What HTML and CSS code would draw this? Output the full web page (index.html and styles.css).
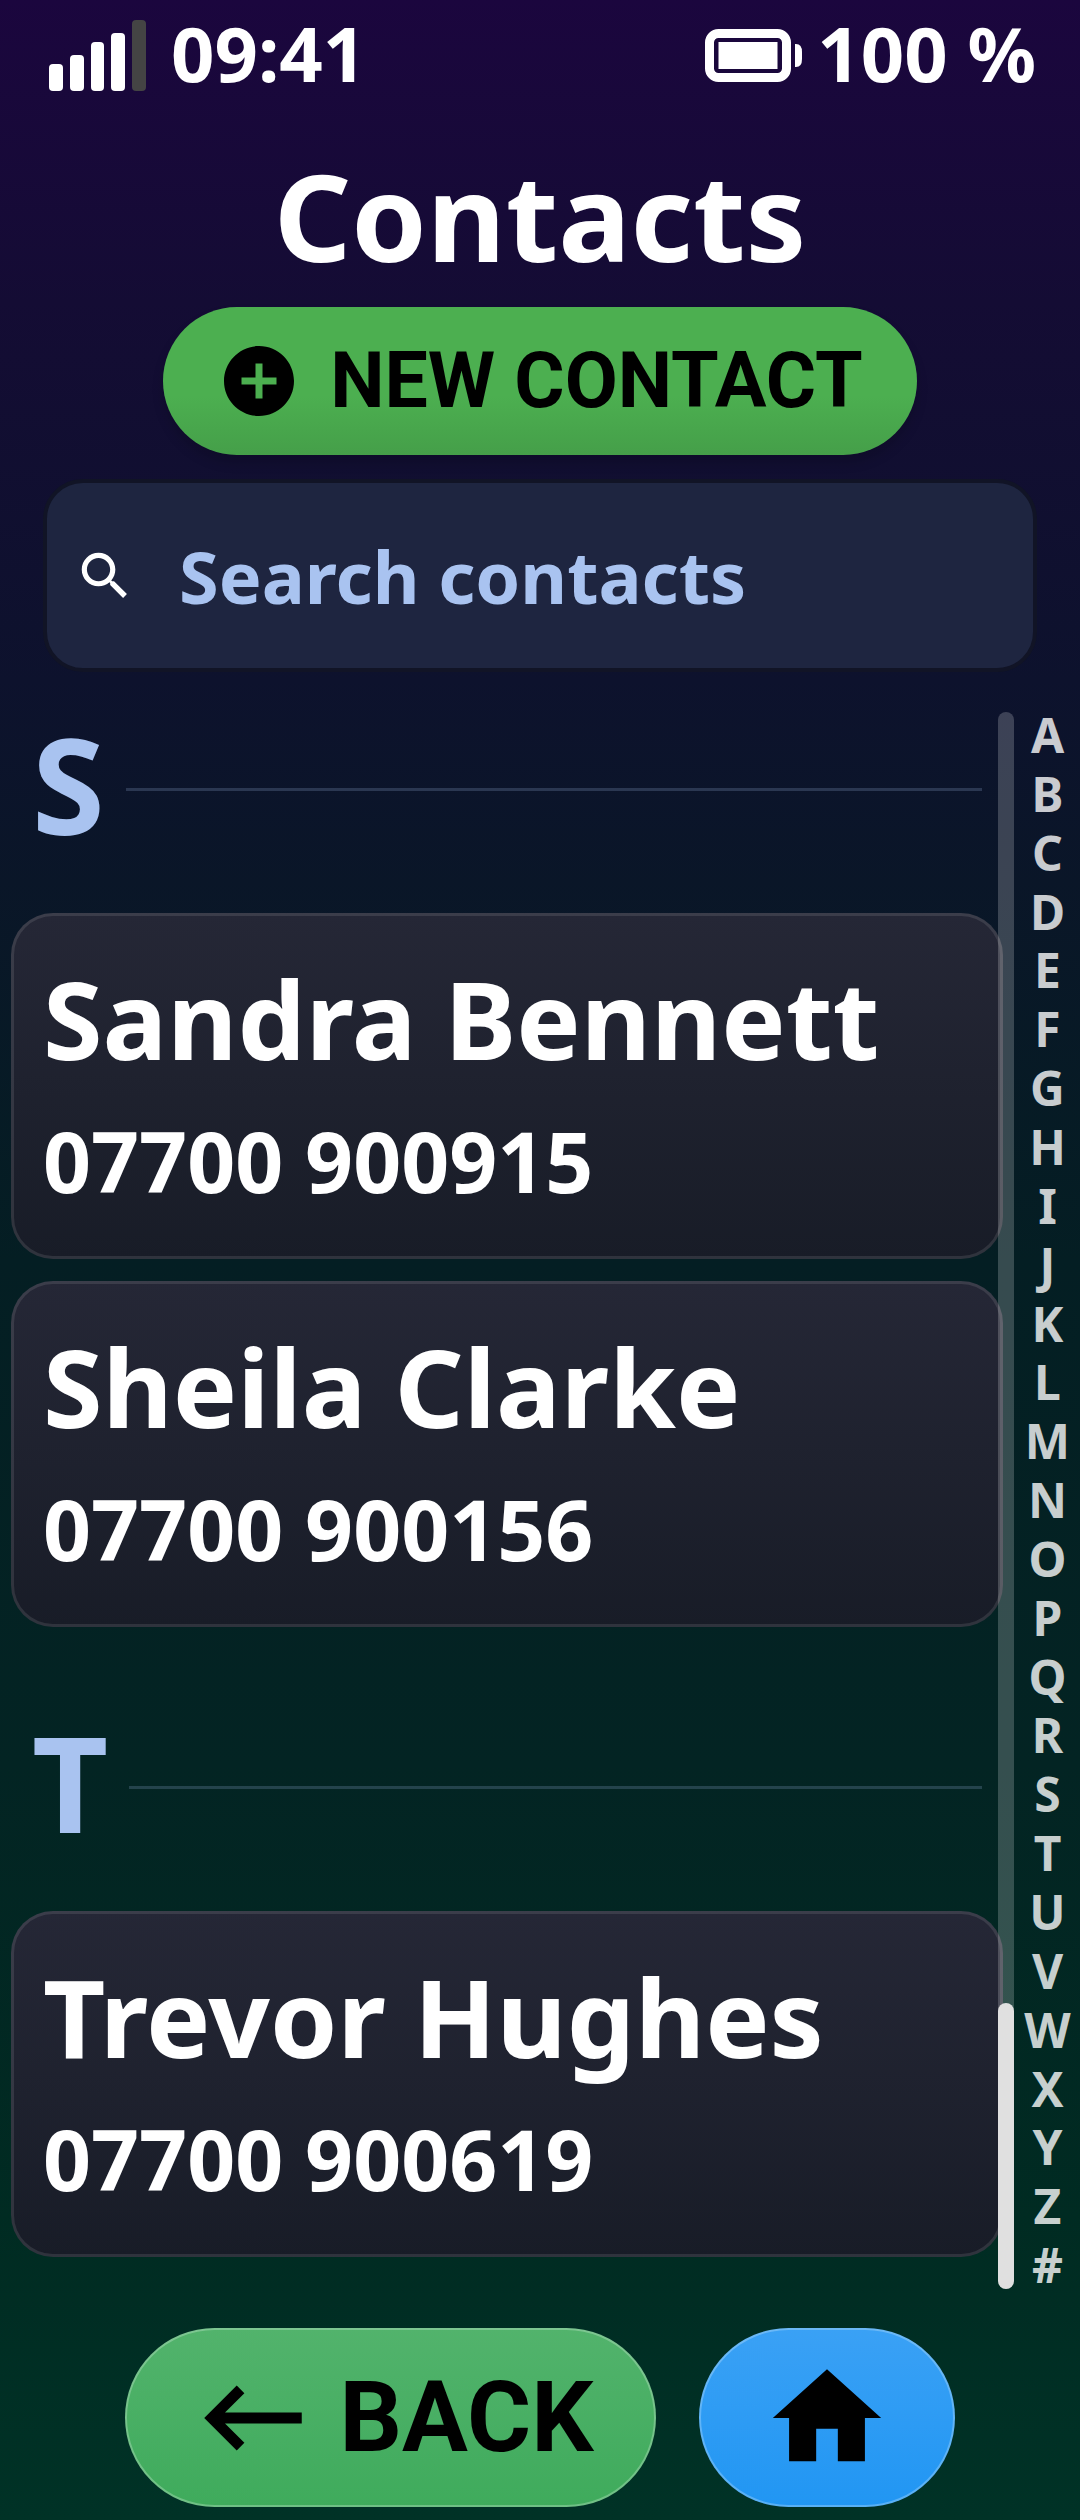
FILE: index.html
```html
<!DOCTYPE html>
<html lang="en">
<head>
  <meta charset="utf-8">
  <meta name="viewport" content="width=device-width, initial-scale=1">
  <title>Contacts</title>
  <link rel="stylesheet" href="styles.css">
</head>
<body>
  <header class="status">
    <div class="status-group">
      <svg class="status-icon" width="98" height="72" viewBox="0 0 98 72" aria-hidden="true">
        <g fill="#fff">
          <rect x="0" y="44" width="14" height="27" rx="4"/>
          <rect x="21" y="35" width="14" height="36" rx="4"/>
          <rect x="42" y="22" width="13" height="49" rx="4"/>
          <rect x="62" y="13" width="14" height="58" rx="4"/>
        </g>
        <rect x="83" y="0" width="14" height="71" rx="4" fill="#444"/>
      </svg>
      <span>09:41</span>
    </div>
    <div class="status-group">
      <svg class="status-icon" width="98" height="54" viewBox="0 0 98 54" aria-hidden="true">
        <rect x="4.500" y="4.500" width="77" height="44" rx="9" fill="none" stroke="#fff" stroke-width="9"/>
        <rect x="13.500" y="13" width="59" height="27" fill="#fff"/>
        <path d="M90 15h1q6 0 6 8v7q0 8-6 8h-1z" fill="#fff"/>
      </svg>
      <span>100 %</span>
    </div>
  </header>

  <h1 class="title">Contacts</h1>

  <button class="new-contact" type="button">
    <svg width="84" height="84" viewBox="0 0 24 24" aria-hidden="true"><path d="M12 2C6.480 2 2 6.480 2 12s4.480 10 10 10 10-4.480 10-10S17.520 2 12 2zm5 11h-4v4h-2v-4H7v-2h4V7h2v4h4v2z"/></svg>
    NEW CONTACT
  </button>

  <label class="search">
    <svg width="62" height="62" viewBox="0 0 24 24" aria-hidden="true"><path fill="#fff" d="M15.500 14h-.79l-.28-.27C15.410 12.590 16 11.110 16 9.500 16 5.910 13.090 3 9.500 3S3 5.910 3 9.500 5.910 16 9.500 16c1.610 0 3.090-.59 4.230-1.570l.27.28v.79l5 4.990L20.490 19l-4.990-5zm-6 0C7.010 14 5 11.990 5 9.500S7.010 5 9.500 5 14 7.010 14 9.500 11.990 14 9.500 14z"/></svg>
    <input class="search-input" type="text" placeholder="Search contacts" aria-label="Search contacts">
  </label>

  <main class="browser">
    <div class="list">
      <section class="group">
        <h2 class="group-title">S</h2>
        <div class="cards">
          <button class="card" type="button"><span class="name">Sandra Bennett</span><span class="number">07700 900915</span></button>
          <button class="card" type="button"><span class="name">Sheila Clarke</span><span class="number">07700 900156</span></button>
        </div>
      </section>
      <section class="group">
        <h2 class="group-title">T</h2>
        <div class="cards">
          <button class="card" type="button"><span class="name">Trevor Hughes</span><span class="number">07700 900619</span></button>
        </div>
      </section>
      <div class="scrollbar"><div class="thumb"></div></div>
    </div>
    <nav class="index" aria-label="Jump to letter">
      <a href="#">A</a><a href="#">B</a><a href="#">C</a><a href="#">D</a><a href="#">E</a><a href="#">F</a><a href="#">G</a><a href="#">H</a><a href="#">I</a><a href="#">J</a><a href="#">K</a><a href="#">L</a><a href="#">M</a><a href="#">N</a><a href="#">O</a><a href="#">P</a><a href="#">Q</a><a href="#">R</a><a href="#">S</a><a href="#">T</a><a href="#">U</a><a href="#">V</a><a href="#">W</a><a href="#">X</a><a href="#">Y</a><a href="#">Z</a><a href="#">#</a>
    </nav>
  </main>

  <footer class="footer">
    <button class="pill back" type="button">
      <svg width="130" height="130" viewBox="0 0 24 24" aria-hidden="true"><path d="M21 11H6.830l3.580-3.590L9 6l-6 6 6 6 1.410-1.410L6.830 13H21z"/></svg>
      BACK
    </button>
    <button class="pill home" type="button" aria-label="Home">
      <svg width="130" height="130" viewBox="0 0 24 24" aria-hidden="true"><path d="M10 20v-6h4v6h5v-8h3L12 3 2 12h3v8z"/></svg>
    </button>
  </footer>
</body>
</html>
```

FILE: styles.css
```css
* {
  box-sizing: border-box;
}

body {
  margin: 0;
  min-height: 100vh;
  display: flex;
  flex-direction: column;
  background: linear-gradient(180deg, #1b063e 0%, #140c34 12%, #0d122d 27%, #0a1628 35%, #041e23 50%, #032423 70%, #002b22 88%, #003226 100%);
  color: #fff;
  font-family: "Noto Sans", sans-serif;
  font-weight: 700;
}

button {
  margin: 0;
  border: 0;
  color: inherit;
  font: inherit;
}

svg {
  flex: none;
}

/* Status bar */
.status {
  display: flex;
  justify-content: space-between;
  padding: 0 44px 0 49px;
  font-size: 76px;
  line-height: 106px;
}

.status-group {
  display: flex;
  align-items: center;
  gap: 24px;
}

.status-group + .status-group {
  gap: 14px;
}

.status-icon {
  margin-top: 5px;
}

.title {
  margin: 17px 0 0;
  font-size: 121px;
  line-height: 184px;
  text-align: center;
}

.new-contact {
  align-self: center;
  display: flex;
  align-items: center;
  gap: 29px;
  height: 148px;
  padding: 0 54px;
  border-radius: 74px;
  background: linear-gradient(180deg, #4caf50 60%, #459f49 100%);
  box-shadow: 0 8px 12px rgba(0, 0, 0, 0.15);
  color: #000;
  font: 700 77px Roboto, sans-serif;
}

/* Search */
.search {
  display: flex;
  align-items: center;
  gap: 43px;
  height: 193px;
  margin: 24px 43px 0;
  padding: 0 27px;
  border: 4px solid #111426;
  border-radius: 40px;
  background: #1e2540;
}

.search-input {
  flex: 1;
  min-width: 0;
  padding: 0;
  border: 0;
  outline: 0;
  background: none;
  color: #fff;
  font: inherit;
  font-size: 72px;
}

.search-input::placeholder {
  color: #a9c3f0;
  opacity: 1;
}

/* Contact list with letter index */
.browser {
  flex: 1;
  display: grid;
  grid-template-columns: 1fr 65px;
  margin-top: 33px;
}

.list {
  position: relative;
  display: flex;
  flex-direction: column;
  gap: 84px;
  padding: 8px 12px 0 11px;
}

.group {
  display: flex;
  flex-direction: column;
  gap: 58px;
}

.group-title {
  display: flex;
  align-items: center;
  gap: 21px;
  margin: 0 21px;
  color: #a9c3f0;
  font-size: 132px;
  line-height: 142px;
}

.group-title::after {
  content: "";
  flex: 1;
  height: 3px;
  margin-top: 11px;
  background: rgba(169, 195, 240, 0.2);
}

.cards {
  display: flex;
  flex-direction: column;
  gap: 22px;
}

.card {
  display: flex;
  flex-direction: column;
  align-items: flex-start;
  gap: 11px;
  padding: 30px 29px 37px;
  border: 3px solid rgba(255, 255, 255, 0.1);
  border-radius: 42px;
  background: linear-gradient(180deg, #252736, #181c27) border-box;
  text-align: left;
}

.name {
  font-size: 108px;
  line-height: 146px;
}

.number {
  font-size: 84px;
  line-height: 116px;
}

.scrollbar {
  position: absolute;
  top: 7px;
  right: 1px;
  bottom: 5px;
  width: 16px;
  display: flex;
  flex-direction: column;
  justify-content: flex-end;
  border-radius: 8px;
  background: rgba(255, 255, 255, 0.2);
}

.thumb {
  height: 286px;
  border-radius: 8px;
  background: #e0e0e0;
}

.index {
  display: grid;
  grid-auto-rows: 1fr;
  margin: 1px 0 -1px;
  font-size: 48px;
  line-height: 58px;
  text-align: center;
}

.index a {
  color: rgba(255, 255, 255, 0.78);
  text-decoration: none;
}

/* Bottom navigation */
.footer {
  display: flex;
  justify-content: center;
  gap: 43px;
  padding: 34px 0 13px;
}

.pill {
  display: flex;
  align-items: center;
  gap: 22px;
  height: 179px;
  padding: 0 61px;
  border: 2px solid rgba(255, 255, 255, 0.25);
  border-radius: 90px;
  color: #000;
  font: 700 98px Roboto, sans-serif;
}

.back {
  background: linear-gradient(180deg, #52b36c, #3fab5c) border-box;
}

.home {
  background: linear-gradient(180deg, #3aa1f5, #2196f3) border-box;
}
```
